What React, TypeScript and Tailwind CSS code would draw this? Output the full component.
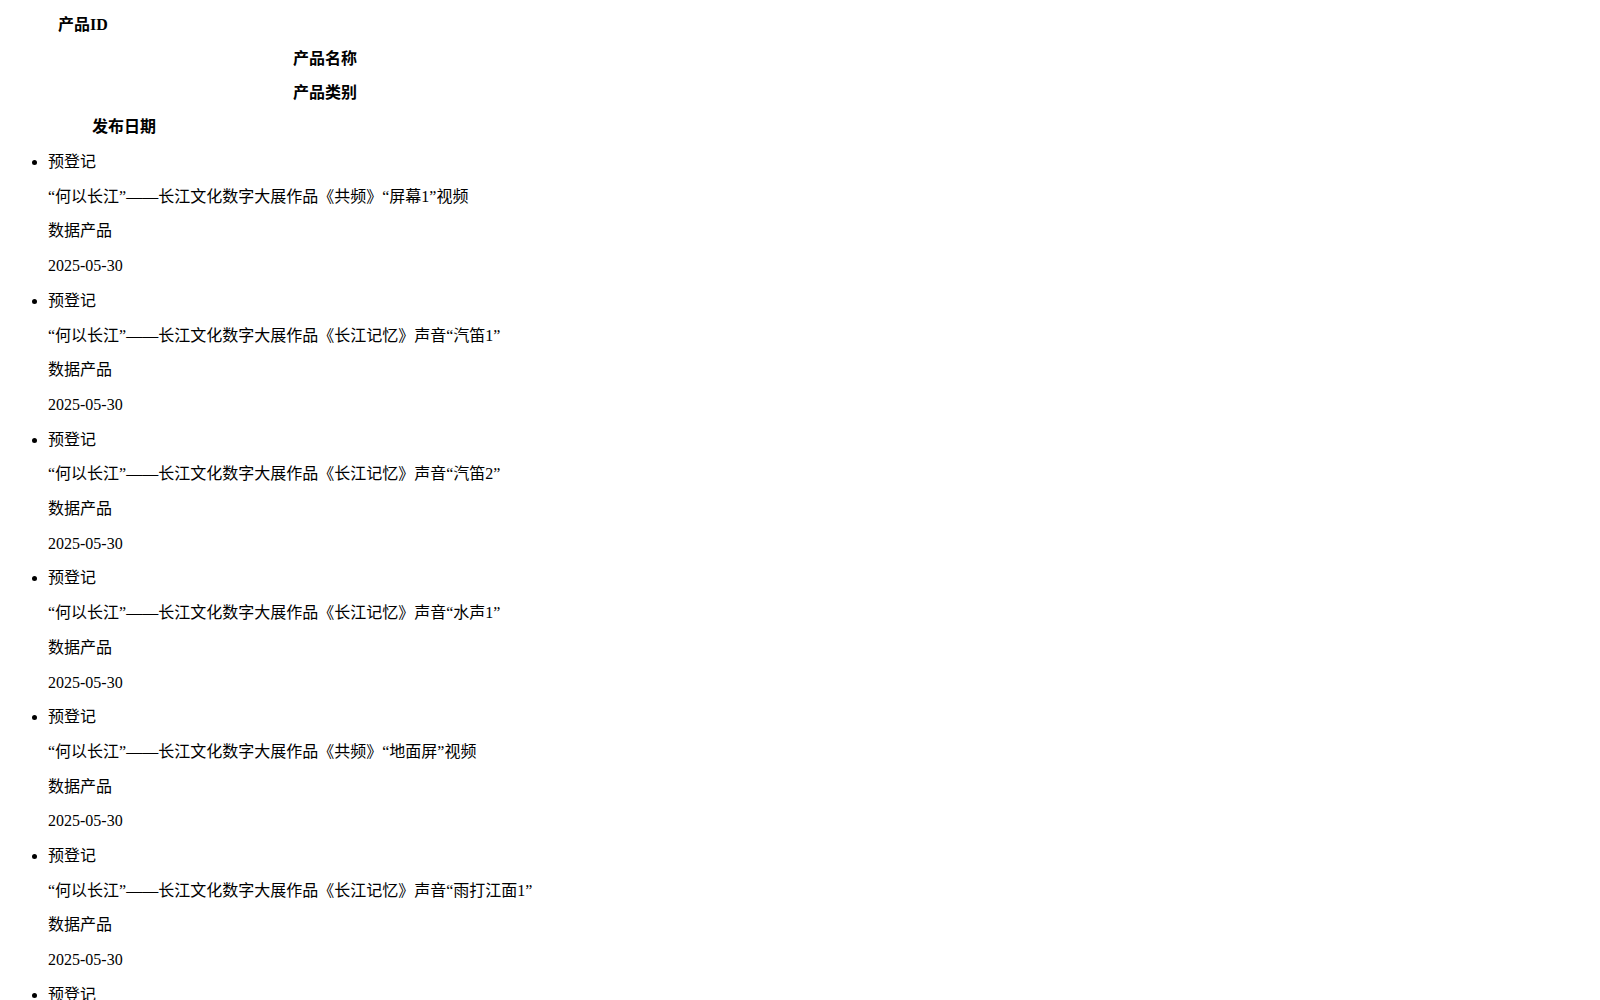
import React from 'react';

const products: string[] = [
  '“何以长江”——长江文化数字大展作品《共频》“屏幕1”视频',
  '“何以长江”——长江文化数字大展作品《长江记忆》声音“汽笛1”',
  '“何以长江”——长江文化数字大展作品《长江记忆》声音“汽笛2”',
  '“何以长江”——长江文化数字大展作品《长江记忆》声音“水声1”',
  '“何以长江”——长江文化数字大展作品《共频》“地面屏”视频',
  '“何以长江”——长江文化数字大展作品《长江记忆》声音“雨打江面1”',
  '“何以长江”——长江文化数字大展作品《长江记忆》声音“雨打江面2”',
  '“何以长江”——长江文化数字大展作品《长江记忆》声音“水声2”',
  '“何以长江”——长江文化数字大展作品《共频》“屏幕2”视频',
  '“何以长江”——长江文化数字大展作品《长江记忆》声音“号子1”',
  '“何以长江”——长江文化数字大展作品《长江记忆》声音“号子2”',
  '“何以长江”——长江文化数字大展作品《共频》“屏幕3”视频',
  '“何以长江”——长江文化数字大展作品《长江记忆》声音“汽笛3”',
  '“何以长江”——长江文化数字大展作品《长江记忆》声音“水声3”',
  '“何以长江”——长江文化数字大展作品《共频》“穹顶屏”视频',
  '“何以长江”——长江文化数字大展作品《长江记忆》声音“码头1”',
  '“何以长江”——长江文化数字大展作品《长江记忆》声音“码头2”',
  '“何以长江”——长江文化数字大展作品《共频》“屏幕4”视频',
  '“何以长江”——长江文化数字大展作品《长江记忆》声音“江风1”',
  '“何以长江”——长江文化数字大展作品《长江记忆》声音“江风2”',
  '“何以长江”——长江文化数字大展作品《共频》“屏幕5”视频',
  '“何以长江”——长江文化数字大展作品《长江记忆》声音“渡轮1”',
  '“何以长江”——长江文化数字大展作品《长江记忆》声音“渡轮2”',
  '“何以长江”——长江文化数字大展作品《共频》“墙面屏”视频',
];

const App: React.FC = () => {
  return (
    <div className="h-screen overflow-y-scroll bg-white text-black text-base font-['Liberation_Serif','Noto_Sans_CJK_SC',serif] [&::-webkit-scrollbar]:w-[15px] [&::-webkit-scrollbar-track]:bg-[#f1f1f1] [&::-webkit-scrollbar-thumb]:bg-[#c1c1c1] [&::-webkit-scrollbar-thumb]:border-x-2 [&::-webkit-scrollbar-thumb]:border-[#f1f1f1]">
      <div className="px-2 py-4">
        {/* column headers, left over from the table head */}
        <div className="flex flex-col gap-4 font-bold leading-[18px]">
          <div className="ml-[50px]">产品ID</div>
          <div className="ml-[285px]">产品名称</div>
          <div className="ml-[285px]">产品类别</div>
          <div className="ml-[84px]">发布日期</div>
        </div>

        <ul className="list-disc pl-10 mt-[17px]">
          {products.map((name, i) => (
            <li key={i} className="leading-[18.7px]">
              <p className="my-4">预登记</p>
              <p className="my-4">{name}</p>
              <p className="my-4">数据产品</p>
              <p className="my-4">2025-05-30</p>
            </li>
          ))}
        </ul>
      </div>
    </div>
  );
};

export default App;
